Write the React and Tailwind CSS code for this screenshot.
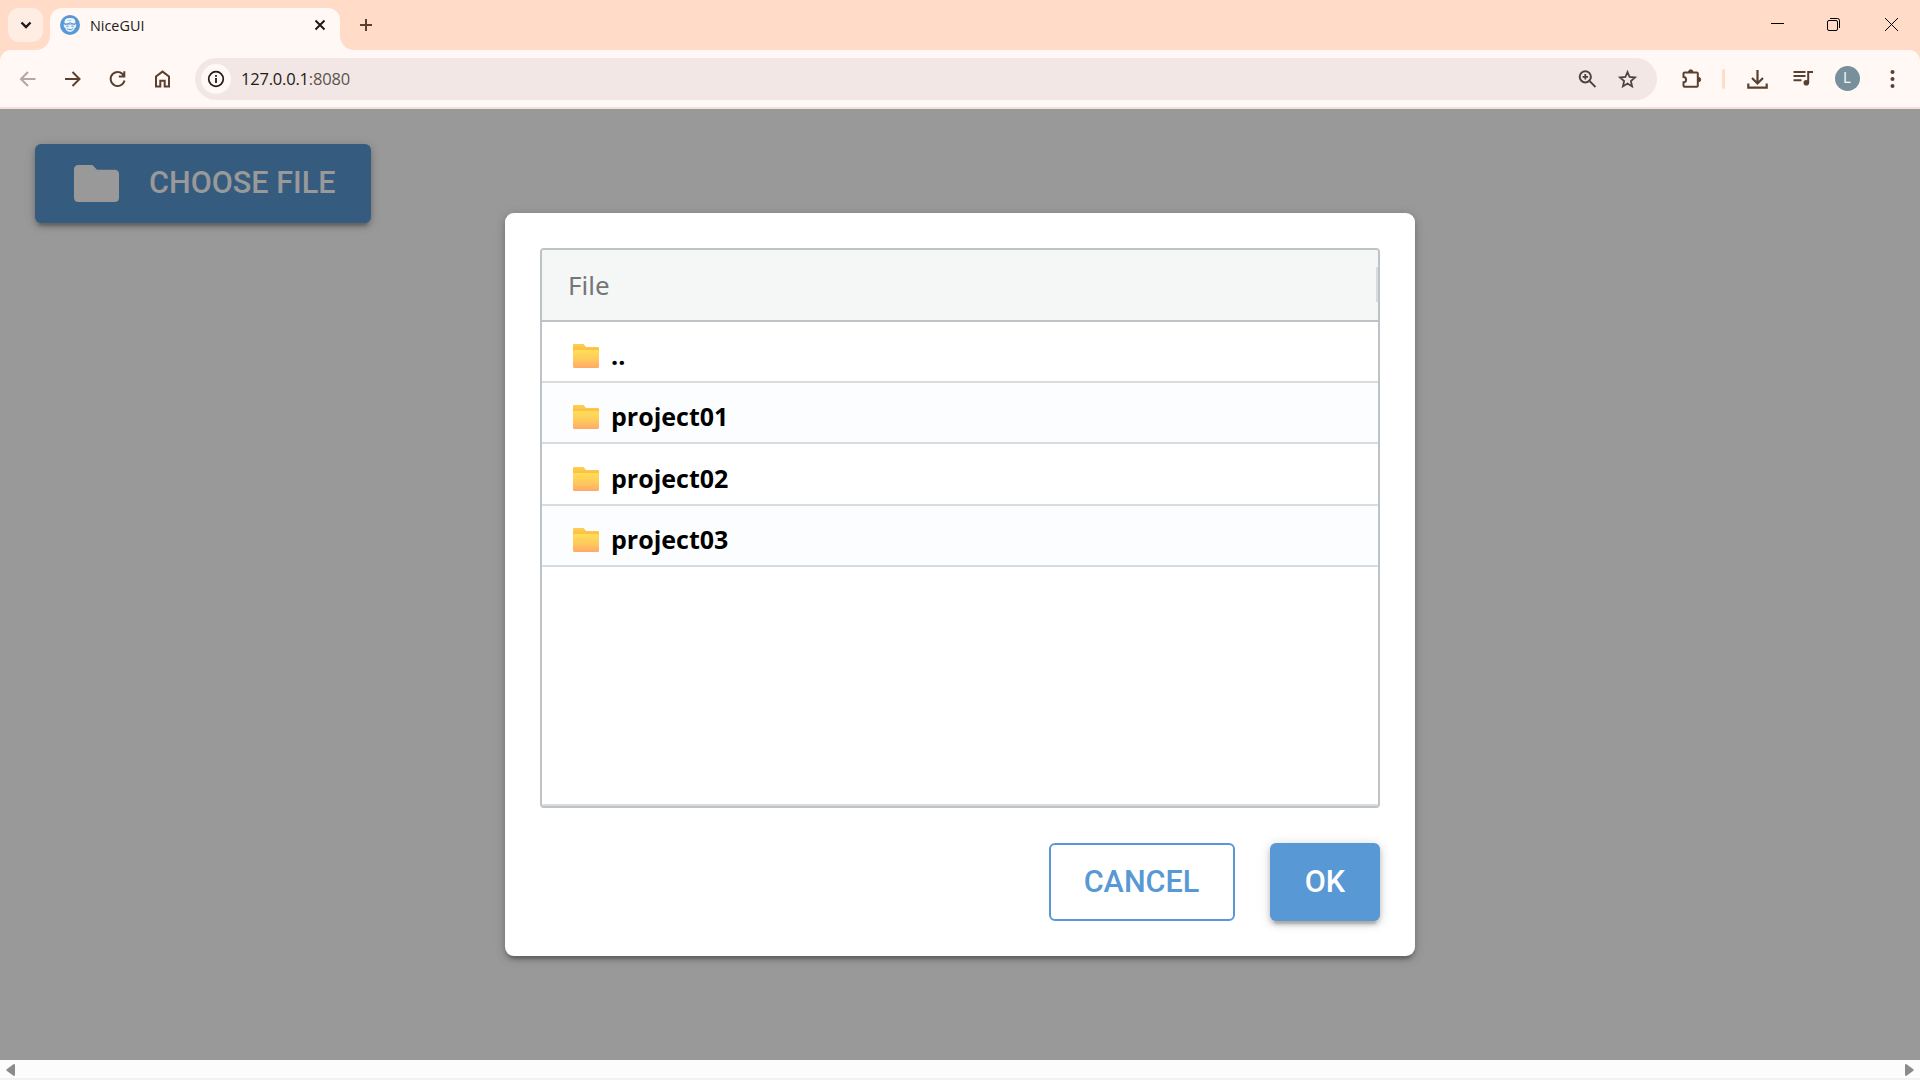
import React from "react";

const Icon = ({ size = 24, children, className = "" }) => (
  <svg width={size} height={size} viewBox={`0 0 ${size} ${size}`} fill="none" stroke="currentColor" strokeWidth="2" className={`block shrink-0 ${className}`}>
    {children}
  </svg>
);

const Slot = ({ children }) => <div className="flex h-[45px] w-[45px] shrink-0 items-center justify-center">{children}</div>;

function Logo() {
  return (
    <svg width="20" height="20" viewBox="0 0 20 20" className="block shrink-0">
      <circle cx="10" cy="10" r="10" fill="#5898d4" />
      <path d="M4.800 8.500C3.800 5 6 3 9 3.300c2.200-.8 5.200-.3 6 1.900.5 1.200.4 2.300.2 3.300z" fill="#f4f9fe" />
      <path d="M3.600 9.500h12.800l-.4 2.700-1 .4C14.300 15.400 12.500 17 10 17s-4.300-1.600-5-4.400l-1-.4z" fill="#e6f1fb" />
      <path d="M5 9.300c2.400 0 4-.8 5-1.800 1.400 1.100 3 1.600 5 1.700" fill="none" stroke="#5898d4" strokeWidth="1" />
      <path d="M6.300 11.200h2.200M11.500 11.200h2.200M7 13.700c1.700 1.300 4.300 1.300 6 0" fill="none" stroke="#5898d4" strokeWidth="1" />
      <path d="M7.500 5.600c1.500.3 2.800 0 3.800-.8" fill="none" stroke="#5898d4" strokeWidth=".6" />
    </svg>
  );
}

function TabStrip() {
  return (
    <div className="flex h-[50px] bg-[#ffdbc8]">
      <div className="ml-2 mt-2 flex h-[34px] w-[35px] items-center justify-center rounded-[11px] bg-[#ffede4] text-[#1f1a18]">
        <Icon size={12}><path d="M1.500 3.500 6 8l4.500-4.500" strokeWidth="2.400" /></Icon>
      </div>
      <svg width="15" height="15" viewBox="0 0 15 15" className="-ml-2 block self-end"><path d="M15 0v15H0C9 15 15 9 15 0" fill="#fff8f5" /></svg>
      <div className="mt-2 flex h-[42px] w-[290px] items-center rounded-t-[12px] bg-[#fff8f5] pb-[8px] pl-[10px] pr-[14px] text-[#221a16]">
        <Logo />
        <span className="ml-[10px] mt-px grow font-['Open_Sans'] text-[14.400px] leading-5 tracking-[0px]">NiceGUI</span>
        <Icon size={12}><path d="m1.500 1.500 9 9m0-9-9 9" /></Icon>
      </div>
      <svg width="15" height="15" viewBox="0 0 15 15" className="block self-end"><path d="M0 0v15h15C6 15 0 9 0 0" fill="#fff8f5" /></svg>
      <div className="ml-[4px] mt-[18px] text-[#5a4030]">
        <Icon size={14}><path d="M7 1v12M1 7h12" /></Icon>
      </div>
      <div className="grow" />
      <div className="mr-[21px] mt-[17px] flex gap-[42px] text-black">
        <Icon size={15}><path d="M1 6.500h13" strokeWidth="1" /></Icon>
        <Icon size={15}>
          <rect x=".5" y="3.500" width="10" height="10" rx="1.500" strokeWidth="1" />
          <path d="M3 1.500h7.500a2 2 0 0 1 2 2V11" strokeWidth="1" />
        </Icon>
        <Icon size={15}><path d="m1 1 13 13M14 1 1 14" strokeWidth="1" /></Icon>
      </div>
    </div>
  );
}

function Toolbar() {
  return (
    <div className="h-[59px] bg-[#ffdbc8]">
      <div className="flex h-[57px] items-center rounded-t-[11px] bg-[#fff8f5] pl-[5px] pr-[5px] text-[#5a4030]">
        <Slot><Icon className="text-[#b5a7a1]"><path d="M19.500 12H5.500m6.500-7L5 12l7 7" /></Icon></Slot>
        <Slot><Icon><path d="M4 12h14m-6.500-7 7 7-7 7" /></Icon></Slot>
        <Slot><Icon><path d="M18 9a7 7 0 1 0 .5 4.500M18.300 4.200v5.300h-5.500" /></Icon></Slot>
        <Slot><Icon><path d="M5 19.500v-10l6.500-4.900L18 9.500v10h-4.300v-5.700H9.300v5.700z" /></Icon></Slot>
        <div className="ml-[10px] flex h-[42px] grow items-center rounded-full bg-[#f2e7e4] pl-[6px] pr-[17px]">
          <div className="flex h-[30px] w-[30px] items-center justify-center rounded-full bg-[#fff8f5] text-[#221a16]">
            <Icon size={18}><circle cx="9" cy="9" r="7.300" strokeWidth="1.700" /><path d="M9 8v5M9 5v1.800" strokeWidth="1.800" /></Icon>
          </div>
          <span className="ml-[10px] mt-px grow font-['Open_Sans'] text-[16.500px] leading-6 tracking-[-0.200px] text-[#221a16]">127.0.0.1<span className="text-[#5c5350]">:8080</span></span>
          <div className="flex gap-4 text-[#4e443f]">
            <Icon><circle cx="9.300" cy="9.800" r="5.600" /><path d="m13.500 14 6 6M9.300 7v5.600M6.500 9.800h5.600" strokeWidth="1.800" /></Icon>
            <Icon><path d="m11.500 5 2.100 5 5.400.5-4.100 3.600 1.200 5.300-4.600-2.800-4.600 2.800 1.200-5.300L4 10.500l5.400-.5z" strokeWidth="1.800" /></Icon>
          </div>
        </div>
        <div className="w-[12px]" />
        <Slot><Icon><path d="M3.500 6.500a1 1 0 0 1 1-1h12.300a1 1 0 0 1 1 1v12.300a1 1 0 0 1-1 1H4.500a1 1 0 0 1-1-1v-3.500c3.500-.3 3.500-5 0-5.300z" /><path d="M8.500 5a2.200 2.200 0 0 1 4.400 0zM18.500 10.400a2.200 2.200 0 0 1 0 4.400z" fill="currentColor" strokeWidth="1" /></Icon></Slot>
        <div className="ml-[8px] mr-[10px] h-[20px] w-[3px] rounded-full bg-[#ffdbc8]" />
        <Slot><Icon><path d="M11.500 3v13M6 11l5.500 5.500L17 11M2.300 16.500v4.200h18.400v-4.200" strokeWidth="2.200" /></Icon></Slot>
        <Slot><Icon><path d="M2.500 5h12M2.500 9h12M2.500 13.200h8M17.200 16V4.900H22" /><circle cx="15.300" cy="15.800" r="2.800" fill="currentColor" stroke="none" /></Icon></Slot>
        <Slot><div className="flex h-[25px] w-[25px] items-center justify-center rounded-full bg-[#78909c] pr-px font-['Roboto'] text-[14px] text-[#f4f6f8]">L</div></Slot>
        <Slot><Icon><g fill="currentColor" stroke="none"><circle cx="11.500" cy="5" r="2" /><circle cx="11.500" cy="12" r="2" /><circle cx="11.500" cy="19" r="2" /></g></Icon></Slot>
      </div>
      <div className="h-[2px] bg-[#f6dfd4]" />
    </div>
  );
}

const FolderEmoji = () => (
  <svg width="26" height="24" viewBox="0 0 26 24" className="block shrink-0">
    <defs>
      <linearGradient id="front" x1="0" y1="0" x2="0" y2="1"><stop offset="0" stopColor="#ffde55" /><stop offset=".5" stopColor="#ffcb5c" /><stop offset="1" stopColor="#ffa968" /></linearGradient>
      <linearGradient id="back" x1="0" y1="0" x2="0" y2="1"><stop offset="0" stopColor="#ffce52" /><stop offset="1" stopColor="#fcb43d" /></linearGradient>
    </defs>
    <path d="M0 1Q0 0 1 0h9.500l2.500 3h12q1 0 1 1v6H0z" fill="url(#back)" />
    <rect y="6" width="26" height="18" rx="1.500" fill="url(#front)" />
  </svg>
);

const files = [
  { name: "..", row: "h-[61px] pt-[9px] bg-white" },
  { name: "project01", row: "h-[61px] pt-[9px] bg-[#fcfdfe]" },
  { name: "project02", row: "h-[62px] pt-[10px] bg-white" },
  { name: "project03", row: "h-[61px] pt-[9px] bg-[#fcfdfe]" },
];

const elevation = "shadow-[0_2px_11px_rgba(0,0,0,0.2),0_4px_4px_rgba(0,0,0,0.14),0_7px_2px_-4px_rgba(0,0,0,0.12)]";

function Dialog() {
  return (
    <div className="flex h-[743px] w-[910px] flex-col rounded-[9px] bg-white p-[35px] shadow-[0_2px_11px_rgba(0,0,0,0.2),0_4px_4px_rgba(0,0,0,0.14),0_7px_2px_-4px_rgba(0,0,0,0.12)]">
      <div className="flex h-[560px] flex-col overflow-hidden rounded-[4px] border-2 border-[#bdc3c7] font-['Open_Sans']">
        <div className="flex h-[72px] shrink-0 items-center justify-between border-b-2 border-[#bdc3c7] bg-[#f5f7f7] pl-[26px]">
          <span className="font-['Noto_Sans'] text-[26px] leading-8 text-[#757676]">File</span>
          <div className="mb-px h-[35px] w-[2px] bg-[#d9dcde]" />
        </div>
        {files.map((f) => (
          <div key={f.name} className={`flex shrink-0 items-center border-b-2 border-[#d9dcde] pl-[31px] ${f.row}`}>
            <FolderEmoji />
            <span className="mb-[3px] ml-[12px] text-[25px] font-bold leading-8 text-black">{f.name}</span>
          </div>
        ))}
        <div className="grow border-b-2 border-[#d9dcde]" />
      </div>
      <div className="mt-[35px] flex justify-end gap-[35px] font-['Roboto'] text-[30.600px] font-medium">
        <button className="h-[78px] w-[186px] rounded-[6px] border-2 border-[#5898d4] pr-px text-[#5898d4]">CANCEL</button>
        <button className={`h-[78px] w-[110px] rounded-[6px] bg-[#5898d4] text-white ${elevation}`}>OK</button>
      </div>
    </div>
  );
}

function ScrollBar() {
  return (
    <div className="flex h-[20px] items-center justify-between border-b-2 border-[#f2f2f2] bg-[#fcfcfc] px-[6px] pt-[2px]">
      <svg width="9" height="12" viewBox="0 0 9 12"><path d="M9 1.200v9.600Q9 12 7.800 12L.6 6.800Q0 6 .6 5.200L7.800 0Q9 0 9 1.200" fill="#8b8b8b" /></svg>
      <svg width="9" height="12" viewBox="0 0 9 12"><path d="M0 1.200v9.600Q0 12 1.200 12l7.200-5.200q.6-.8 0-1.600L1.200 0Q0 0 0 1.200" fill="#8b8b8b" /></svg>
    </div>
  );
}

export default function App() {
  return (
    <div className="flex h-[1080px] w-[1920px] flex-col overflow-hidden">
      <TabStrip />
      <Toolbar />
      <main className="relative h-[951px] bg-[#999999] p-[35px]">
        <button className={`flex h-[79px] w-[336px] items-center rounded-[6px] bg-[#355b7f] pl-[39px] font-['Roboto'] text-[30.600px] font-medium text-[#999999] ${elevation}`}>
          <svg width="45" height="37" viewBox="0 0 45 37" className="mt-[-1px] block shrink-0"><path d="M4.500 0h14L23 4.700h17.500Q45 4.700 45 9.200v23.300q0 4.500-4.500 4.500h-36Q0 37 0 32.500v-28Q0 0 4.500 0" fill="#999999" /></svg>
          <span className="mb-[2px] ml-[30px] whitespace-nowrap">CHOOSE FILE</span>
        </button>
        <div className="absolute inset-0 flex items-center justify-center">
          <Dialog />
        </div>
      </main>
      <ScrollBar />
    </div>
  );
}
